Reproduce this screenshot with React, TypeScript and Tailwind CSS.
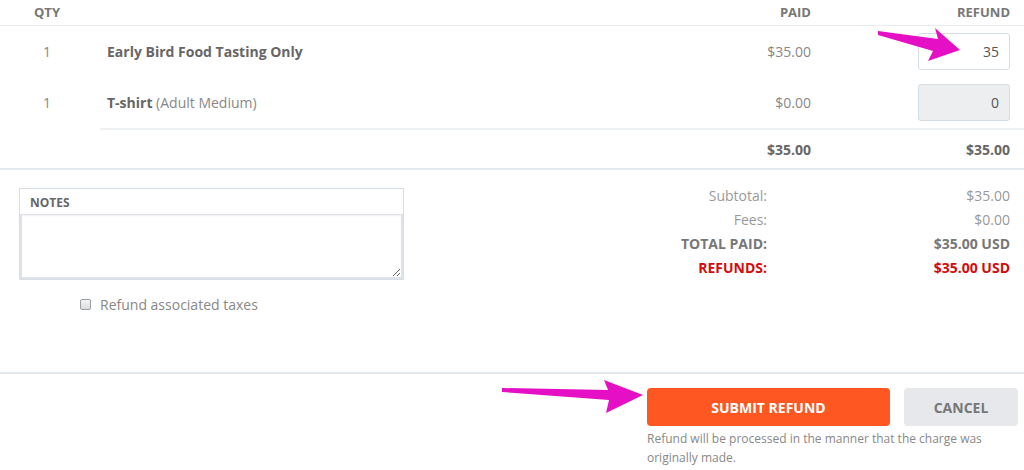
export default function App() {
  return (
    <div className="relative w-[1024px] h-[470px] overflow-hidden bg-white font-['Open_Sans',sans-serif] text-[#777]">
      {/* items table */}
      <div className="flex h-[26px] items-center border-b border-[#e8ecef] text-[13px] font-bold text-[#777]">
        <div className="w-[106px] pr-[12px] text-center">QTY</div>
        <div className="flex-1" />
        <div className="w-[140px] text-right">PAID</div>
        <div className="w-[213px] pr-[14px] text-right">REFUND</div>
      </div>
      <div className="flex h-[51px] items-center text-[14px]">
        <div className="w-[94px] text-center text-[#888]">1</div>
        <div className="flex-1 pl-[13px] font-bold text-[#666]">Early Bird Food Tasting Only</div>
        <div className="w-[140px] text-right text-[#888]">$35.00</div>
        <div className="flex w-[213px] justify-end pr-[14px]">
          <input
            readOnly
            value="35"
            className="h-[37px] w-[92px] rounded-[3px] border border-[#d6dde3] bg-white px-[10px] text-right text-[14px] text-[#555] outline-none"
          />
        </div>
      </div>
      <div className="flex h-[51px] items-center text-[14px]">
        <div className="w-[94px] text-center text-[#888]">1</div>
        <div className="flex-1 pl-[13px] text-[#888]">
          <span className="font-bold text-[#666]">T-shirt</span> (Adult Medium)
        </div>
        <div className="w-[140px] text-right text-[#888]">$0.00</div>
        <div className="flex w-[213px] justify-end pr-[14px]">
          <input
            readOnly
            value="0"
            className="h-[37px] w-[92px] rounded-[3px] border border-[#d6dde3] bg-[#eceef0] px-[10px] text-right text-[14px] text-[#555] outline-none"
          />
        </div>
      </div>
      <div className="ml-[100px] flex h-[40px] items-center border-t-2 border-[#eef1f3] text-[14px] font-bold text-[#666]">
        <div className="flex-1" />
        <div className="w-[140px] text-right">$35.00</div>
        <div className="w-[213px] pr-[14px] text-right">$35.00</div>
      </div>

      {/* notes + summary */}
      <div className="flex h-[204px] border-t-2 border-[#e3e8ec] pt-[18px]">
        <div className="w-[404px] pl-[19px]">
          <div className="border border-[#d8dfe4]">
            <div className="h-[25px] pl-[10px] pt-[2px] text-[12px] font-bold leading-[24px] text-[#666]">NOTES</div>
            <textarea className="block h-[65px] w-full resize-y border-2 border-t border-[#dde3e8] bg-white shadow-[inset_0_1px_2px_rgba(0,0,0,0.06)] outline-none" />
          </div>
          <label className="mt-[14px] flex items-center pl-[61px] text-[14px] text-[#888]">
            <span className="mr-[9px] inline-block h-[11px] w-[11px] rounded-[2px] border border-[#9aa0a6] bg-gradient-to-b from-[#f4f4f4] to-[#dcdcdc]" />
            Refund associated taxes
          </label>
        </div>
        <div className="flex-1 text-[14px]">
          <div className="-mt-[3px] grid grid-cols-[1fr_243px] gap-y-[3px] pr-[14px] leading-[21px]">
            <div className="text-right text-[#999]">Subtotal:</div>
            <div className="text-right text-[#999]">$35.00</div>
            <div className="text-right text-[#999]">Fees:</div>
            <div className="text-right text-[#999]">$0.00</div>
            <div className="text-right font-bold text-[#777]">TOTAL PAID:</div>
            <div className="text-right font-bold text-[#777]">$35.00 USD</div>
            <div className="text-right font-bold text-[#d40b0b]">REFUNDS:</div>
            <div className="text-right font-bold text-[#d40b0b]">$35.00 USD</div>
          </div>
        </div>
      </div>

      {/* actions */}
      <div className="flex border-t-2 border-[#e3e8ec] pt-[14px]">
        <div className="w-[647px]" />
        <div className="w-[243px]">
          <button className="h-[38px] w-[243px] rounded-[4px] bg-[#ff5722] text-[14px] font-bold text-white">
            SUBMIT REFUND
          </button>
          <p className="mt-[3px] w-[340px] text-[12px] leading-[19px] text-[#888]">
            Refund will be processed in the manner that the charge was originally made.
          </p>
        </div>
        <div className="ml-[14px]">
          <button className="h-[38px] w-[114px] rounded-[4px] bg-[#e6e8eb] text-[14px] font-bold text-[#777]">
            CANCEL
          </button>
        </div>
      </div>

      {/* annotation arrows */}
      <svg className="absolute left-[872px] top-[24px]" width="100" height="44" viewBox="0 0 100 44">
        <polygon points="6,7 66,15 63,4 88,26 56,37 61,27 6,11" fill="#e510c6" />
      </svg>
      <svg className="absolute left-[498px] top-[378px]" width="150" height="40" viewBox="0 0 150 40">
        <polygon points="4,10 110,12 106,2 145,17 108,35 111,22 4,14" fill="#e510c6" />
      </svg>
    </div>
  );
}
